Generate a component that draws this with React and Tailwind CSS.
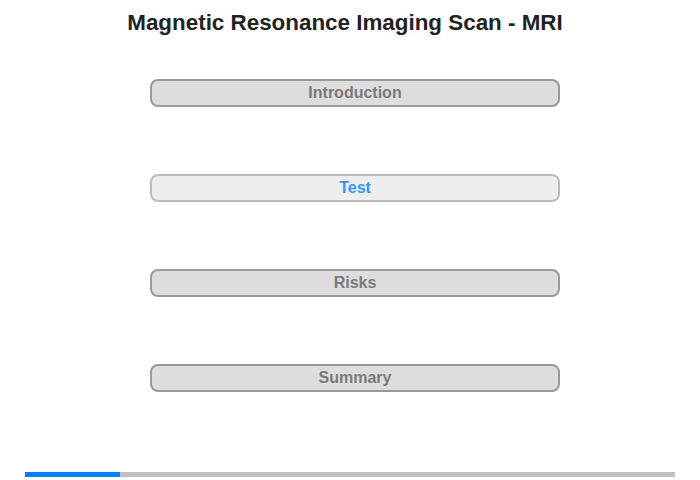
export default function App() {
  const sections = ["Introduction", "Test", "Risks", "Summary"];
  const active = "Test";

  return (
    <div className="w-[700px] h-[480px] bg-white relative" style={{ fontFamily: '"Liberation Sans", Arial, sans-serif' }}>
      <h1 className="w-[690px] pt-[11px] text-center text-[22.4px] leading-[24px] font-bold text-[#222]">
        Magnetic Resonance Imaging Scan - MRI
      </h1>

      <div className="ml-[150px] mt-[44px] w-[410px] flex flex-col gap-[67px]">
        {sections.map((s) => (
          <button
            key={s}
            className={
              s === active
                ? "h-[28px] rounded-[8px] border-2 border-[#bbbbbb] bg-[#eeeeee] text-[#3399ff] text-[16px] font-bold"
                : "h-[28px] rounded-[8px] border-2 border-[#999999] bg-[#dddddd] text-[#7a7a7a] text-[16px] font-bold"
            }
          >
            {s}
          </button>
        ))}
      </div>

      <div className="absolute left-[25px] top-[472px] w-[650px] h-[5px] bg-[#c0c0c0]">
        <div className="w-[95px] h-full bg-[#0080ff]" />
      </div>
    </div>
  );
}
